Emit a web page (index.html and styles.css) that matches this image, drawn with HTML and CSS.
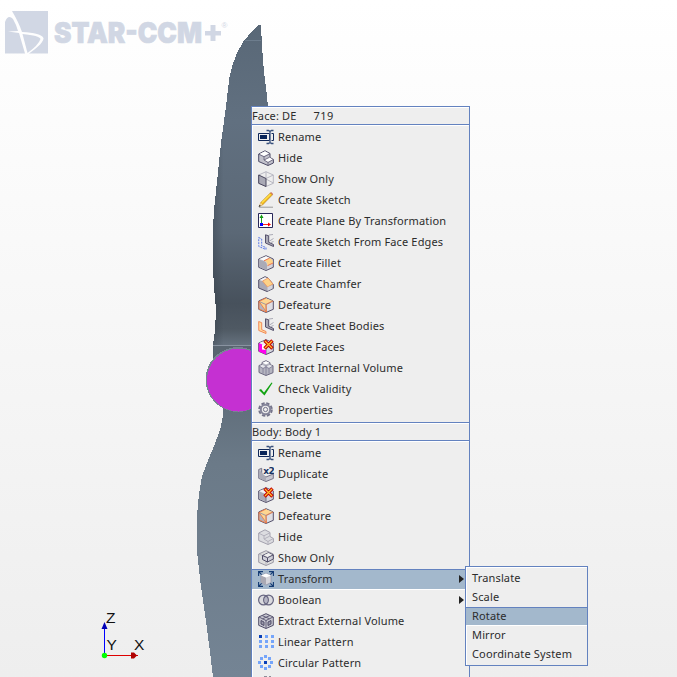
FILE: index.html
```html
<!DOCTYPE html>
<html lang="en">
<head>
<meta charset="utf-8">
<title>STAR-CCM+</title>
<link rel="stylesheet" href="styles.css">
</head>
<body>
<svg class="defs" width="0" height="0" aria-hidden="true">
  <defs>
    <symbol id="rename" viewBox="0 0 16 16"><path d="M.5 4.500h11v7H.5zM13.500 4.500h2v7h-2" fill="none" stroke="#10285a"/><path d="M2 6h7v4H2z" fill="#082458"/><path d="M8.500 1.500h2l1.500 1 1.500-1h2M8.500 14.500h2l1.500-1 1.500 1h2M12 2v12" fill="none" stroke="#38507c" stroke-width="1.300"/></symbol>
    <symbol id="hide" viewBox="0 0 16 16"><path d="M.7 4 7 .8l5 2.700v4l3.400 2V13L10 15.500.7 11.500z" fill="#c2c2cc" stroke="#4b4965"/><path d="M1.500 4 7 1.300l4 2.200L6 6zM6.500 9.700l5-2.200 3.300 2-4.800 2.500z" fill="#fff"/><path d="m1 4.300 5 2.500 6-3M6 6.800V10l4 2.500 5.300-3M10 12.500v3M6 10l5.500-2.700" fill="none" stroke="#6c697f" stroke-width=".9"/></symbol>
    <symbol id="showface" viewBox="0 0 16 16"><path d="M8 .7 15.300 4v8.300L8 15.500.7 12.300V4zM15.300 4 8 7.500M8 .7V8l7.300 4M8 8l-7 4" fill="none" stroke="#b8b8c2"/><path d="M.7 4 8 7.500v8L.7 12.300z" fill="#a9a9b5" stroke="#49465d"/></symbol>
    <symbol id="pencil" viewBox="0 0 16 16"><path d="M1 15.200h14" stroke="#9a9a9a"/><path d="m1.500 14 1.300-3.500L12.500.8l2 2L4.500 13z" fill="#f3b91c" stroke="#ad7b22" stroke-width=".6"/><path d="m4 10.500 8.500-8.300" stroke="#ffe04a" stroke-width="1.300"/><path d="m1.500 14 1.300-3.500 1.700 2.500z" fill="#f3d5a0"/><path d="m.5 15 1-2 1.500 1z" fill="#222"/><path d="m12 .8 1.500-.5 1.500 1.500v1.500z" fill="#cf7560"/></symbol>
    <symbol id="plane" viewBox="0 0 16 16"><path d="M.5.500h14v14H.5z" fill="#fff" stroke="#29285a"/><path d="M3.500 11V3" stroke="#20a020"/><path d="m1.500 5 2-3.500 2 3.500z" fill="#129a12"/><path d="M4 11.500h8" stroke="#f22"/><path d="m10 9.500 3 2-3 2z" fill="#f00"/><path d="M2 10h3v3H2z" fill="#00f"/></symbol>
    <symbol id="edges" viewBox="0 0 16 16"><path d="m.7 3.500 3 1.500v7L8 13.500v2L.8 12.500z" fill="none" stroke="#5878e8" stroke-dasharray="2 1"/><path d="m7.500.8 3.200 1v6.500l4.800 2.200v2l-8-3.500z" fill="#aaaab5" stroke="#55516c"/><path d="m11 1 4-.5M11.500 7l4-2.500M12.500 8.700l3-1.200" stroke="#aaaab5"/></symbol>
    <symbol id="sheet" viewBox="0 0 16 16"><path d="m.7 3.500 3 1.200v7L8 13.500v2L.8 12.500z" fill="#ffdca0" stroke="#f28a58"/><path d="m7.500.8 3.200 1v6.500l4.800 2.200v2l-8-3.500z" fill="#aaaab5" stroke="#55516c"/><path d="m11 1 4-.5M11.500 7l4-2.500M12.500 8.700l3-1.200" stroke="#aaaab5"/></symbol>
    <symbol id="cube" viewBox="0 0 16 16"><path d="M8 .7 15.300 4v8.300L8 15.500.7 12.300V4z" fill="#d4d4dc" stroke="#55516c"/><path d="M1.200 4.300 8 7.500v7.300l-6.800-3z" fill="#aaaab6"/><path d="M8 1.200 14.800 4 8 7 1.200 4z" fill="#f2f2f5"/><path d="M8 7.500v7.500" stroke="#77748b"/></symbol>
    <symbol id="fillet" viewBox="0 0 16 16"><path d="M8 .7 15.300 4v8.300L8 15.500.7 12.300V4z" fill="#d4d4dc" stroke="#55516c"/><path d="M1.500 4 8 1.200l3.500 1.500L6 5.500z" fill="#fafafa"/><path d="M1.200 4.500 6 6Q9 7 9 10.500v4.300l-1 .2-6.800-3.200z" fill="#aaaab6"/><path d="m6 5.800 5.500-2.600Q15 4 15 8L9.500 10.700Q9.500 6.500 6 5.800z" fill="#fdd287"/><path d="m6 5.800 5.500-2.600M9.500 10.700 15 8" stroke="#ee7752"/></symbol>
    <symbol id="chamfer" viewBox="0 0 16 16"><path d="m7 .7 3 1.300 5.300 6.500v4L9 15.500.7 12V4z" fill="#aaaab6" stroke="#55516c"/><path d="M1.500 4 7 1.200l3 1.300L4.500 5z" fill="#f5f5f7"/><path d="m4.500 5 5.500-3 5 6-5.500 3z" fill="#fdd287" stroke="#ef9460" stroke-width=".8"/><path d="M9.500 11v4l5-2.500V9z" fill="#d4d4dc"/></symbol>
    <symbol id="defeature" viewBox="0 0 16 16"><path d="M8 .7 15.300 4v8.300L8 15.500.7 12.300V4z" fill="#dedee4" stroke="#55516c"/><path d="m1 4.500 7-3.200 6.800 2.700L8 7.500 8.500 15z" fill="#fed691"/><path d="m1 4.500 7.500 10.500L1 12z" fill="#b4b4bf"/><path d="M8 7.500 15 4M8 7.500V15M1 4.500l7 3" fill="none" stroke="#9a98a8"/><path d="m1 4.500 7.500 10.500L8 7.500M1 4.500l7-3.500M8 7.500 15 4M1 4.500V12l7.500 3" fill="none" stroke="#ef7a43" stroke-width=".9"/></symbol>
    <symbol id="cross" viewBox="0 0 16 16"><path d="m6.500 1.500 8 8M14.500 1.500l-8 8" stroke="#c60000" stroke-width="3.400"/><path d="m7 2 7 7M14 2 7 9" stroke="#ffc02c" stroke-width="1.200"/></symbol>
    <symbol id="deleteface" viewBox="0 0 16 16"><use href="#cube"/><path d="m.8 4 7.200 3.500v8L.8 12.500z" fill="#f0e"/><path d="M4 5.500 8 6v5l-4-.5z" fill="#fff"/><use href="#cross"/></symbol>
    <symbol id="delete" viewBox="0 0 16 16"><use href="#cube"/><use href="#cross"/></symbol>
    <symbol id="internal" viewBox="0 0 16 16"><path d="m8 .7 4 2v2l3 1v7L8 15.500l-7-3v-7l3-1v-2z" fill="#b5b5c0" stroke="#6c6980"/><path d="m4.500 2.800 3.500-1.500 3.500 1.500L8 4.500z" fill="#fff"/><path d="m1.500 6 3-1.300L7.500 7 5 8zM8.500 7l3-2.300 3 1.300L11 8z" fill="#e6e6eb"/><path d="M8 5v10M1 6l4 2.500L8 7l3 1.500L15 6M5 8.500v5M11 8.500v5" fill="none" stroke="#85829a" stroke-width=".9"/></symbol>
    <symbol id="check" viewBox="0 0 16 16"><path d="m1 9 2-1 3 3.500L13.500 1.500l1 .5L6.500 14.500z" fill="#13a313"/></symbol>
    <symbol id="gear" viewBox="0 0 16 16"><circle cx="7.500" cy="7.500" r="6.300" fill="none" stroke="#74748a" stroke-width="2" stroke-dasharray="3.300 1.650"/><circle cx="7.500" cy="7.500" r="4.700" fill="none" stroke="#85859a" stroke-width="2"/><circle cx="7.500" cy="7.500" r="2.100" fill="none" stroke="#74748a"/></symbol>
    <symbol id="duplicate" viewBox="0 0 16 16"><path d="m.7 3.500 3-1.200v7L8 11l7.300-3v4.500L8 15.500.7 12.300z" fill="#c7c7d0" stroke="#77748a"/><path d="m1.200 4 6.800 7v4l-6.800-3z" fill="#aaaab6"/><text x="5.300" y="7.500" class="times">x2</text></symbol>
    <symbol id="hidden" viewBox="0 0 16 16"><path d="M.7 4 7 .8l5 2.700v4l3.400 2V13L10 15.500.7 11.500z" fill="#dcdce0" stroke="#a3a1ae"/><path d="m1 4.300 5 2.500 6-3M6 6.800V10l4 2.500 5.300-3M10 12.500v3M6 10l5.500-2.700" fill="none" stroke="#b4b2bd"/></symbol>
    <symbol id="showbody" viewBox="0 0 16 16"><path d="M8 .7 15.300 4v8.300L8 15.500.7 12.300V4z" fill="#ddd" stroke="#9a98a5"/><path d="m1 4 7 3v8" fill="none" stroke="#b6b5be"/><path d="m4.500 5.500 6-2.800 4.800 2.300v4L9.500 12l-5-2.500z" fill="#d0d0d9" stroke="#514e69"/><path d="m5.500 5.300 5-2.300 4 2-5 2.300z" fill="#eee"/><path d="m4.500 5.500 5 2.200L15 5M9.500 8v4" fill="none" stroke="#514e69"/></symbol>
    <symbol id="transform" viewBox="0 0 16 16"><path d="m8 2.500 5 2v7l-5 2.500-5-2.500v-7z" fill="#d5d5db" stroke="#85859a" stroke-width=".6"/><path d="m3 4.500 5 2v7l-5-2z" fill="#aaa9b3"/><path d="m3 4.500 5-2 5 2-5 2z" fill="#fff"/><path d="M.6 5V.6H5M.6.6l3 3M11 .6h4.400V5M15.400.6l-3 3M.6 11v4.400H5M.6 15.400l3-3M11 15.400h4.400V11M15.400 15.400l-3-3" fill="none" stroke="#123a73" stroke-width="1.100"/></symbol>
    <symbol id="boolean" viewBox="0 0 16 16"><circle cx="5.500" cy="8" r="4.900" fill="#dadade"/><circle cx="10.500" cy="8" r="4.900" fill="#dadade"/><path d="M8 4q3.500 4 0 8-3.500-4 0-8" fill="#b5b5c4"/><g fill="none" stroke="#666580" stroke-width="1.200"><circle cx="5.500" cy="8" r="4.900"/><circle cx="10.500" cy="8" r="4.900"/></g></symbol>
    <symbol id="external" viewBox="0 0 16 16"><path d="M8 .7 15.300 4v8.300L8 15.500.7 12.300V4z" fill="#c8c8d1" stroke="#514e69"/><path d="m1 4 7 3.500L15 4M8 7v8M4 2.500l7.500 3.300M12 2.500 4.500 5.800" fill="none" stroke="#625f79"/><path d="M3 7.500 6 9v3.500L3 11zM10 9l3-1.500V11l-3 1.500z" fill="#9897a9" stroke="#514e69"/></symbol>
    <symbol id="linear" viewBox="0 0 16 16"><path d="M7 1h3v3H7zM13 1h3v3h-3zM1 6h3v3H1zM7 6h3v3H7zM13 6h3v3h-3zM1 11h3v3H1zM7 11h3v3H7zM13 11h3v3h-3z" fill="#75a5fa"/><path d="M1 1h3v3H1z" fill="#0940b8"/></symbol>
    <symbol id="circular" viewBox="0 0 16 16"><path d="M6 0h3v3H6zM2 2h3v3H2zM10 2h3v3h-3zM0 6h3v3H0zM12 6h3v3h-3zM2 10h3v3H2zM10 10h3v3h-3zM6 12h3v3H6z" fill="#75a5fa"/><path d="M6 6h3v3H6z" fill="#0940b8"/></symbol>
    <symbol id="more" viewBox="0 0 16 16"><path d="M6 0h3v1H6zM11 0h2v1h-2z" fill="#8e8d98"/></symbol>
  </defs>
</svg>

<main class="viewport">
  <svg class="scene" width="677" height="677" viewBox="0 0 677 677">
    <defs>
      <linearGradient id="blade" gradientUnits="userSpaceOnUse" x1="0" y1="25" x2="0" y2="345"><stop offset="0" stop-color="#596877"/><stop offset=".3" stop-color="#617080"/><stop offset=".65" stop-color="#5b6876"/><stop offset=".87" stop-color="#47515c"/><stop offset=".95" stop-color="#4f5963"/><stop offset="1" stop-color="#65717e"/></linearGradient>
      <linearGradient id="lower" gradientUnits="userSpaceOnUse" x1="0" y1="410" x2="0" y2="677"><stop offset="0" stop-color="#62707d"/><stop offset=".2" stop-color="#6b7a88"/><stop offset="1" stop-color="#748494"/></linearGradient>
      <linearGradient id="shade" x1="0" x2="1"><stop offset="0" stop-color="#28323c" stop-opacity=".3"/><stop offset=".2" stop-color="#28323c" stop-opacity="0"/></linearGradient>
      <path id="upper-shape" d="M258 25H261L262 47 264 72 267 96 268 107V367H213V345L215 330 216 310 214 287 212.500 260V237L214 210 217.500 177 221 143 225.500 110 229.500 77 232.500 65 237 53 243.500 41z"/>
    </defs>
    <g shape-rendering="crispEdges">
      <use href="#upper-shape" fill="url(#blade)"/>
      <use href="#upper-shape" fill="url(#shade)"/>
      <path d="M214 346h38v70h-28l-1-12-10-14z" fill="#596570"/>
      <path d="M223 408v8l-3 14-6 16-5 12-7 18-3 18-2 21v36l3 28 5 35 5 38 3 25h40V408z" fill="url(#lower)"/>
      <path d="M213 345.500h40" stroke="#8993a0"/>
      <path d="M245 40.500h16" stroke="#6d7d8d"/>
      <circle cx="238" cy="379.500" r="32.500" fill="#788493"/>
      <circle cx="238.500" cy="380" r="31.500" fill="#c530d2"/>
    </g>
    <g fill="#d1d7e4">
      <path d="M12 11h36v42.500H29Q44 43 43.500 38 41 33 22 32q-3-9-10-21z"/>
      <path d="M5 53.500V22q3-8 8-3 3 5 5 12l-10 .5 11 1.500 6 20.500z"/>
      <path d="M22.500 34q17 1.500 18 5-2 6-13 14z"/>
      <text x="54" y="42.500" class="brand" textLength="148" lengthAdjust="spacingAndGlyphs">STAR-CCM</text>
      <path d="M210.500 25h5v6h5.500v4.500h-5.500V41h-5v-5.500H205V31h5.500z"/>
      <text x="221.500" y="28" class="mark">®</text>
    </g>
    <g>
      <path d="M104.500 655v-28" stroke="#00f"/><path d="m104.500 622 3 7h-6z" fill="#0000b8"/>
      <path d="M104 655.500h34" stroke="#d00"/><path d="M131 652.500h3l3 3-3 3h-3z" fill="#b00000"/>
      <circle cx="104.500" cy="655.500" r="2.700" fill="#0f0"/>
      <g class="axis"><text x="106" y="623">Z</text><text x="106.500" y="650">Y</text><text x="134" y="650">X</text></g>
    </g>
  </svg>

  <nav class="menu">
    <header class="menu-title"><span>Face: DE</span><span class="face-id">719</span></header>
    <ul class="items">
      <li><svg><use href="#rename"/></svg><span>Rename</span></li>
      <li><svg><use href="#hide"/></svg><span>Hide</span></li>
      <li><svg><use href="#showface"/></svg><span>Show Only</span></li>
      <li><svg><use href="#pencil"/></svg><span>Create Sketch</span></li>
      <li><svg><use href="#plane"/></svg><span>Create Plane By Transformation</span></li>
      <li><svg><use href="#edges"/></svg><span>Create Sketch From Face Edges</span></li>
      <li><svg><use href="#fillet"/></svg><span>Create Fillet</span></li>
      <li><svg><use href="#chamfer"/></svg><span>Create Chamfer</span></li>
      <li><svg><use href="#defeature"/></svg><span>Defeature</span></li>
      <li><svg><use href="#sheet"/></svg><span>Create Sheet Bodies</span></li>
      <li><svg><use href="#deleteface"/></svg><span>Delete Faces</span></li>
      <li><svg><use href="#internal"/></svg><span>Extract Internal Volume</span></li>
      <li><svg><use href="#check"/></svg><span>Check Validity</span></li>
      <li><svg><use href="#gear"/></svg><span>Properties</span></li>
    </ul>
    <header class="menu-title">Body: Body 1</header>
    <ul class="items">
      <li><svg><use href="#rename"/></svg><span>Rename</span></li>
      <li><svg><use href="#duplicate"/></svg><span>Duplicate</span></li>
      <li><svg><use href="#delete"/></svg><span>Delete</span></li>
      <li><svg><use href="#defeature"/></svg><span>Defeature</span></li>
      <li><svg><use href="#hidden"/></svg><span>Hide</span></li>
      <li><svg><use href="#showbody"/></svg><span>Show Only</span></li>
      <li class="selected parent"><svg><use href="#transform"/></svg><span>Transform</span></li>
      <li class="parent"><svg><use href="#boolean"/></svg><span>Boolean</span></li>
      <li><svg><use href="#external"/></svg><span>Extract External Volume</span></li>
      <li><svg><use href="#linear"/></svg><span>Linear Pattern</span></li>
      <li><svg><use href="#circular"/></svg><span>Circular Pattern</span></li>
      <li><svg><use href="#more"/></svg></li>
    </ul>
  </nav>

  <ul class="submenu">
    <li>Translate</li>
    <li>Scale</li>
    <li class="selected">Rotate</li>
    <li>Mirror</li>
    <li>Coordinate System</li>
  </ul>
</main>
</body>
</html>
```
FILE: styles.css
```css
* { box-sizing: border-box; }
body { margin: 0; overflow: hidden; }
.defs { position: absolute; }
.viewport {
  position: relative;
  width: 677px;
  height: 677px;
  overflow: hidden;
  background: linear-gradient(#fff, #eee);
  font: 11px/16px "Noto Sans", "Open Sans", sans-serif;
  letter-spacing: 0.15px;
  color: #2c2c2c;
}
.scene { display: block; }
.brand { font: 900 29px "Inter", sans-serif; letter-spacing: 0; stroke: #d1d7e4; stroke-width: 0.7px; }
.mark { font: 8px "Liberation Sans", sans-serif; letter-spacing: 0; }
.axis { font: 15.5px "Liberation Sans", sans-serif; letter-spacing: 0; fill: #111; }
.times { font: bold 9px "DejaVu Sans", sans-serif; letter-spacing: -0.5px; fill: #173564; }
ul { margin: 0; padding: 0; list-style: none; }
.menu {
  position: absolute;
  left: 251px;
  top: 106px;
  width: 219px;
  height: 590px;
  border: 1px solid #6382bf;
  background: #eee;
}
.menu-title {
  display: flex;
  height: 18px;
  border-top: 1px solid #fff;
  border-bottom: 1px solid #6382bf;
  white-space: pre;
}
.face-id { margin-left: 17px; letter-spacing: 0.5px; }
.items { padding: 2px 0 1px; box-shadow: inset 1px 1px #fff; }
.items + .menu-title { height: 19px; padding-top: 1px; border-top: 1px solid #6382bf; box-shadow: inset 0 1px #fff; }
.items li {
  display: flex;
  align-items: center;
  gap: 4px;
  height: 21px;
  padding: 0 0 1px 6px;
  white-space: nowrap;
}
.items svg { width: 16px; height: 16px; flex: none; }
.parent::after {
  content: "";
  margin-left: auto;
  margin-right: 5px;
  border: 4.5px solid transparent;
  border-left: 5px solid #222;
  border-right: 0;
}
.selected { background: #a3b8cc; box-shadow: inset 0 1px #6382bf, inset 0 -1px #fff; }
.submenu {
  position: absolute;
  left: 465px;
  top: 566px;
  width: 123px;
  height: 100px;
  padding: 2px 0;
  border: 1px solid #6382bf;
  background: #eee;
  box-shadow: inset 1px 1px #fff;
}
.submenu li { height: 19px; padding-left: 6px; line-height: 17px; white-space: nowrap; }
```
